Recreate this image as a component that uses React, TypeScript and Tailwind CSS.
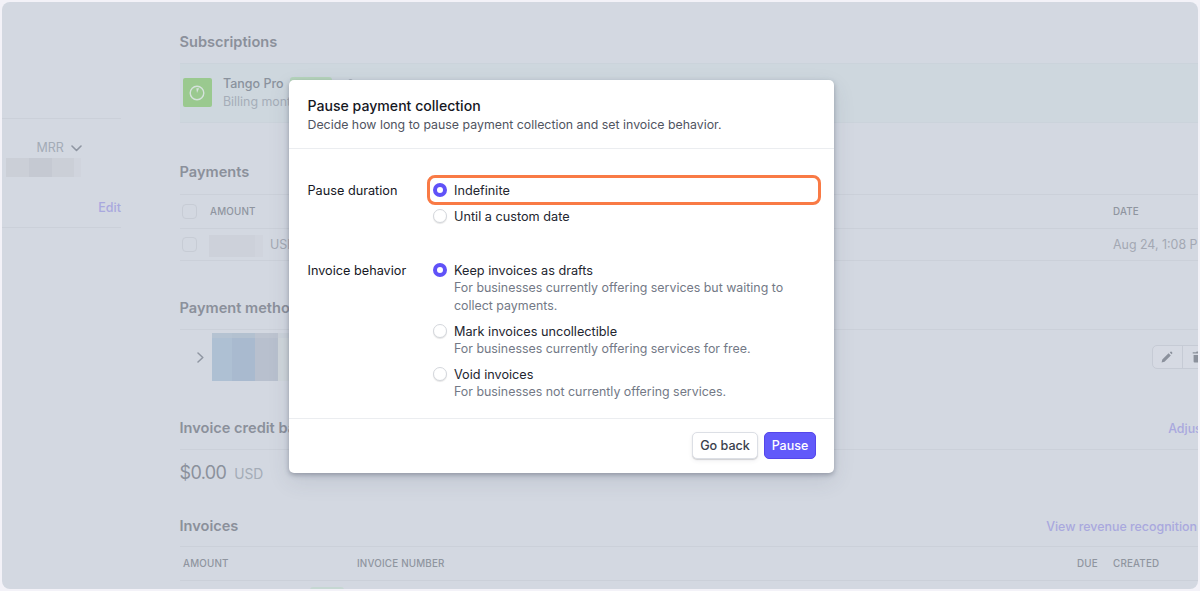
import * as React from "react";
import clsx from "clsx";

type RadioOption = {
  label: string;
  hint?: string;
};

const INVOICE_OPTIONS: RadioOption[] = [
  {
    label: "Keep invoices as drafts",
    hint: "For businesses currently offering services but waiting to collect payments.",
  },
  {
    label: "Mark invoices uncollectible",
    hint: "For businesses currently offering services for free.",
  },
  {
    label: "Void invoices",
    hint: "For businesses not currently offering services.",
  },
];

export default function App() {
  return (
    <div className="h-[591px] w-[1200px] overflow-hidden bg-[#f3f2f8] p-0.5 font-['Inter',sans-serif]">
      <div className="relative flex h-[587px] overflow-hidden rounded-lg bg-[#d3d8e1]">
        <CustomerSidebar />
        <CustomerDetails />
        <PauseDialog />
      </div>
    </div>
  );
}

/* ── Left column, customer summary ── */
function CustomerSidebar() {
  return (
    <aside className="mr-[58px] w-[119px] shrink-0">
      <div className="mt-[116px] border-t border-[#cbd0d9] pt-[18px]">
        <div className="flex h-5 items-center pl-[34.5px] pt-0.5">
          <span className="text-[12.5px] text-[#a3abb6]">MRR</span>
          <svg className="ml-[7px]" width="11" height="7" viewBox="0 0 11 7" fill="none" stroke="#8f96a2" strokeWidth="1.6" strokeLinecap="round" strokeLinejoin="round" aria-hidden="true">
            <path d="M1 1l4.5 4.5L10 1" />
          </svg>
        </div>
        <div className="ml-1 mt-[1px] flex h-[19px]">
          <span className="w-[23px] bg-[#cbcfd7]" />
          <span className="w-[23px] bg-[#c5c9d2]" />
          <span className="w-[22px] bg-[#cbcfd7]" />
          <span className="w-[7px] bg-[#d0d4dd]" />
        </div>
        <div className="mt-[21px] h-5 text-right text-[12.5px] leading-5 font-medium text-[#a9a8de]">Edit</div>
      </div>
      <div className="mt-[9px] border-t border-[#cbd0d9]" />
    </aside>
  );
}

/* ── Main column ── */
function CustomerDetails() {
  return (
    <main className="w-[1019px] shrink-0 overflow-hidden pl-[0.5px]">
      <SectionTitle className="mt-[30px]">Subscriptions</SectionTitle>
      <div className="mt-[11px] flex h-[60px] border-y border-[#cbd3db] bg-[#ced7de] pl-[3px]">
        <span className="mt-3.5 flex size-[29px] items-center justify-center rounded-[2px] bg-[#9ac98f]">
          <svg width="16" height="16" viewBox="0 0 16 16" fill="none" stroke="#d5e2dc" strokeWidth="1.4" aria-hidden="true">
            <circle cx="8" cy="8" r="6.8" />
            <path d="M7.3 3.2h2.8L8 8z" fill="#d5e2dc" stroke="none" />
          </svg>
        </span>
        <div className="ml-[11.5px] mt-[11px] w-[61.5px] whitespace-nowrap leading-[18px]">
          <div className="text-[12.5px] font-medium text-[#8a929d]">Tango Pro</div>
          <div className="text-[12.4px] text-[#a5adb8]">Billing monthly</div>
        </div>
        <span className="ml-[5px] mt-[13px] h-4 w-[42px] rounded-[3px] bg-[#b7d6bd]" />
        <span className="ml-4 mt-[15px] size-[5px] rounded-full bg-[#a8b0ba]" />
      </div>

      <SectionTitle className="mt-[39px]">Payments</SectionTitle>
      <div className="mt-3 flex h-[35px] items-center border-y border-[#cbd0d9]">
        <Checkbox />
        <ColumnLabel className="ml-[13.5px] w-[903px]">Amount</ColumnLabel>
        <ColumnLabel>Date</ColumnLabel>
      </div>
      <div className="flex h-8 items-center border-b border-[#cbd0d9] text-[12.4px] text-[#a3a8b3]">
        <Checkbox />
        <div className="ml-3 mt-0.5 flex h-[22px] shrink-0">
          <span className="w-[46px] bg-[#cdd1da]" />
          <span className="w-2 bg-[#d0d4dd]" />
        </div>
        <span className="ml-[7.5px] mt-0.5 w-[843px] shrink-0">USD</span>
        <span className="mt-0.5 shrink-0 whitespace-nowrap">Aug 24, 1:08 PM</span>
      </div>

      <SectionTitle className="mt-[37px]">Payment methods</SectionTitle>
      <div className="mt-[11px] flex h-[89px] border-t border-[#cbd0d9]">
        <svg className="ml-[17px] mt-[22px] shrink-0" width="7" height="11" viewBox="0 0 7 11" fill="none" stroke="#8f96a2" strokeWidth="1.5" strokeLinecap="round" strokeLinejoin="round" aria-hidden="true">
          <path d="M1 1l4.8 4.5L1 10" />
        </svg>
        <div className="ml-2 mt-[3px] h-12 shrink-0">
          <div className="flex h-[5px]">
            <span className="w-5 bg-[#b5c3d2]" />
            <span className="w-[23px] bg-[#b3c1d0]" />
            <span className="w-[23px] bg-[#bdc4d0]" />
            <span className="w-4 bg-[#cbd2da]" />
          </div>
          <div className="flex h-[43px]">
            <span className="w-5 bg-[#aec0d3]" />
            <span className="w-[23px] bg-[#a9bacf]" />
            <span className="w-[23px] bg-[#b8c0ce]" />
            <span className="w-4 bg-[#cfd6db]" />
          </div>
        </div>
        <div className="ml-[858px] mt-[15px] flex h-6 w-[90px] shrink-0 rounded-[5px] border border-[#c6cbd5] bg-[#d6dae3]">
          <span className="flex w-[30px] shrink-0 items-center justify-center border-r border-[#c6cbd5]">
            <PencilIcon />
          </span>
          <span className="flex items-center pl-[9px]">
            <TrashIcon />
          </span>
        </div>
      </div>

      <SectionTitle action="Adjust" actionClassName="-mr-[8px]">
        Invoice credit balance
      </SectionTitle>
      <div className="mt-[11px] flex h-[67px] items-baseline border-t border-[#cbd0d9] pt-[9px]">
        <span className="text-[18px] tracking-[-0.65px] text-[#8b919c]">$0.00</span>
        <span className="ml-2 text-[13.8px] text-[#a4acb7]">USD</span>
      </div>

      <SectionTitle action="View revenue recognition" actionClassName="mr-px">
        Invoices
      </SectionTitle>
      <div className="mt-2.5 flex h-[35px] items-center border-y border-[#cbd0d9] pl-[3px]">
        <ColumnLabel className="ml-[0.5px] w-[174px]">Amount</ColumnLabel>
        <ColumnLabel className="w-[720px]">Invoice number</ColumnLabel>
        <ColumnLabel className="w-9">Due</ColumnLabel>
        <ColumnLabel>Created</ColumnLabel>
      </div>
      <div className="ml-[130px] mt-1.5 h-4 w-[34px] rounded-[3px] bg-[#c5d7d2]" />
    </main>
  );
}

function SectionTitle({
  children,
  className,
  action,
  actionClassName,
}: {
  children: React.ReactNode;
  className?: string;
  action?: string;
  actionClassName?: string;
}) {
  return (
    <div className={clsx("flex h-5 items-center justify-between whitespace-nowrap pt-0.5", className)}>
      <h2 className="text-[14.6px] font-semibold text-[#8b909b]">{children}</h2>
      {action && (
        <span className={clsx("text-[12.4px] font-medium text-[#a9a8de]", actionClassName)}>{action}</span>
      )}
    </div>
  );
}

function ColumnLabel({ children, className }: { children: React.ReactNode; className?: string }) {
  return (
    <span className={clsx("mt-0.5 shrink-0 text-[9.8px] font-medium tracking-[0.2px] uppercase text-[#8f959f]", className)}>
      {children}
    </span>
  );
}

function Checkbox() {
  return <span className="ml-0.5 size-[15px] shrink-0 rounded-[4px] border border-[#c7ccd5]" />;
}

/* ── Dialog ── */
function PauseDialog() {
  return (
    <div
      role="dialog"
      className="absolute left-[287px] top-[78px] flex h-[393px] w-[545px] flex-col rounded-[5px] bg-white shadow-[0_2px_5px_rgba(50,55,75,0.35),0_8px_22px_rgba(60,66,87,0.12)]"
    >
      <header className="h-[69px] border-b border-[#ebedf0] pl-[18.5px] pt-4">
        <h1 className="text-[14.1px] leading-[19px] font-medium text-[#16181f]">Pause payment collection</h1>
        <p className="text-[12.35px] leading-5 text-[#50545f]">
          Decide how long to pause payment collection and set invoice behavior.
        </p>
      </header>

      <div className="h-[269px] pl-[18.5px] pt-[26px]">
        <div className="flex">
          <FieldLabel className="mt-1.5 w-[119.5px]">Pause duration</FieldLabel>
          <div>
            <div className="flex h-[30px] w-[394px] items-center rounded-[8px] border-3 border-[#f97a45] pl-[3px]">
              <Radio checked />
              <OptionLabel>Indefinite</OptionLabel>
            </div>
            <div className="mt-px flex h-5 items-center pl-1.5">
              <Radio />
              <OptionLabel>Until a custom date</OptionLabel>
            </div>
          </div>
        </div>

        <div className="mt-[35px] flex">
          <FieldLabel className="w-[119.5px]">Invoice behavior</FieldLabel>
          <div className="flex flex-col gap-[7px] pl-1.5">
            {INVOICE_OPTIONS.map((option, i) => (
              <div key={option.label} className="flex">
                <span className="mt-0.5">
                  <Radio checked={i === 0} />
                </span>
                <div>
                  <div className="flex h-[18px] items-center">
                    <OptionLabel>{option.label}</OptionLabel>
                  </div>
                  <p className="ml-[7px] w-[350px] text-[12.4px] leading-[18px] text-[#737986]">{option.hint}</p>
                </div>
              </div>
            ))}
          </div>
        </div>
      </div>

      <footer className="flex flex-1 items-start justify-end gap-1.5 border-t border-[#ebedf0] pr-[18px] pt-[13px]">
        <button className="h-[27px] w-[66px] whitespace-nowrap rounded-[5px] border border-[#dcdfe5] bg-white pt-0.5 text-[12.6px] font-medium text-[#3b3f4c] shadow-[0_1px_1px_rgba(0,0,0,0.14),0_2px_4px_rgba(60,66,87,0.08)]">
          Go back
        </button>
        <button className="h-[27px] w-[52px] rounded-[5px] border border-[#5546ea] bg-[#625afa] pt-0.5 text-[12.5px] font-medium text-white">
          Pause
        </button>
      </footer>
    </div>
  );
}

function FieldLabel({ children, className }: { children: React.ReactNode; className?: string }) {
  return (
    <div className={clsx("shrink-0 text-[12.7px] leading-5 text-[#16181f]", className)}>
      {children}
    </div>
  );
}

function OptionLabel({ children }: { children: React.ReactNode }) {
  return <span className="ml-[7px] mt-0.5 text-[12.7px] leading-[18px] text-[#23262f]">{children}</span>;
}

function Radio({ checked = false }: { checked?: boolean }) {
  return (
    <span
      className={clsx(
        "block size-3.5 shrink-0 rounded-full",
        checked
          ? "border-[4px] border-[#6052f8] bg-white"
          : "border border-[#d4d7dc] bg-white shadow-[0_1px_1px_rgba(0,0,0,0.1)]"
      )}
    />
  );
}

// ─── Icons ────────────────────────────────────────────────────────────────────
function PencilIcon() {
  return (
    <svg width="12" height="12" viewBox="0 0 12 12" fill="#8b919c" aria-hidden="true">
      <path d="M.6 11.4l.7-2.9 6.3-6.3 2.2 2.2-6.3 6.3zM8.8 1.5l.7-.7a.8.8 0 0 1 1.1 0l.6.6a.8.8 0 0 1 0 1.1l-.7.7z" />
    </svg>
  );
}

function TrashIcon() {
  return (
    <svg width="12" height="12" viewBox="0 0 12 12" fill="#8b919c" aria-hidden="true">
      <path d="M4 1.2A1 1 0 0 1 5 .5h2a1 1 0 0 1 1 .7h3.3v1.4H.7V1.2zM1.6 4h8.8v6.4a1 1 0 0 1-1 1H2.6a1 1 0 0 1-1-1z" />
    </svg>
  );
}
